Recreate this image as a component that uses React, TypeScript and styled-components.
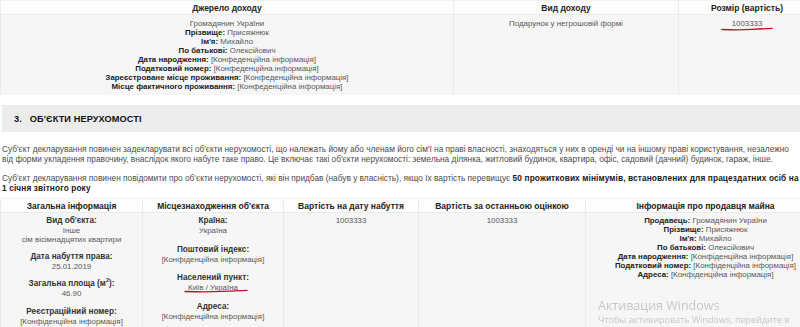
import React from 'react';
import styled, { createGlobalStyle } from 'styled-components';

const GlobalStyle = createGlobalStyle`
  body {
    margin: 0;
    background: #fff;
    font-family: "Liberation Sans", Arial, sans-serif;
    color: #444;
    overflow: hidden;
  }
`;

interface Person {
  label: string;
  value: string;
}

const incomeSource: Person[] = [
  { label: 'Прізвище:', value: 'Присяжнюк' },
  { label: "Ім'я:", value: 'Михайло' },
  { label: 'По батькові:', value: 'Олексійович' },
  { label: 'Дата народження:', value: '[Конфеденційна інформація]' },
  { label: 'Податковий номер:', value: '[Конфеденційна інформація]' },
  { label: 'Зареєстроване місце проживання:', value: '[Конфеденційна інформація]' },
  { label: 'Місце фактичного проживання:', value: '[Конфеденційна інформація]' },
];

const seller: Person[] = [
  { label: 'Продавець:', value: 'Громадянин України' },
  { label: 'Прізвище:', value: 'Присяжнюк' },
  { label: "Ім'я:", value: 'Михайло' },
  { label: 'По батькові:', value: 'Олексійович' },
  { label: 'Дата народження:', value: '[Конфіденційна інформація]' },
  { label: 'Податковий номер:', value: '[Конфіденційна інформація]' },
  { label: 'Адреса:', value: '[Конфіденційна інформація]' },
];

function RedLine({ width }: { width: number }) {
  return (
    <Scribble width={width} height={6} viewBox={`0 0 ${width} 6`}>
      <path
        d={`M1 3.5 Q ${width * 0.35} 4.2 ${width * 0.6} 3.4 T ${width - 1} 2.4`}
        stroke="#c0112a"
        strokeWidth="1.4"
        fill="none"
        strokeLinecap="round"
      />
    </Scribble>
  );
}

export default function App() {
  return (
    <>
      <GlobalStyle />
      <Page>
        <Table>
          <thead>
            <tr>
              <Th $w={448}>Джерело доходу</Th>
              <Th $w={220}>Вид доходу</Th>
              <Th $w={132}>Розмір (вартість)</Th>
            </tr>
          </thead>
          <tbody>
            <tr>
              <Td>
                <Line>Громадянин України</Line>
                {incomeSource.map((p) => (
                  <Line key={p.label}>
                    <b>{p.label}</b> {p.value}
                  </Line>
                ))}
              </Td>
              <Td>
                <Line>Подарунок у негрошовій формі</Line>
              </Td>
              <Td>
                <Marked>
                  1003333
                  <UnderMark $left={-11} $top={7}>
                    <RedLine width={52} />
                  </UnderMark>
                </Marked>
              </Td>
            </tr>
          </tbody>
        </Table>

        <SectionBar>
          <SectionTitle>3.&nbsp;&nbsp; ОБ'ЄКТИ НЕРУХОМОСТІ</SectionTitle>
        </SectionBar>

        <Paragraph>
          Суб'єкт декларування повинен задекларувати всі об'єкти нерухомості, що належать йому або
          членам його сім'ї на праві власності, знаходяться у них в оренді чи на іншому праві
          користування, незалежно від форми укладення правочину, внаслідок якого набуте таке право.
          Це включає такі об'єкти нерухомості: земельна ділянка, житловий будинок, квартира, офіс,
          садовий (дачний) будинок, гараж, інше.
        </Paragraph>
        <Paragraph>
          Суб'єкт декларування повинен повідомити про об'єкти нерухомості, які він придбав (набув у
          власність), якщо їх вартість перевищує{' '}
          <b>50 прожиткових мінімумів, встановлених для працездатних осіб на 1 січня звітного року</b>
        </Paragraph>

        <Table $top={5}>
          <thead>
            <tr>
              <Th $w={137}>Загальна інформація</Th>
              <Th $w={136}>Місцезнаходження об'єкта</Th>
              <Th $w={130}>Вартість на дату набуття</Th>
              <Th $w={162}>Вартість за останньою оцінкою</Th>
              <Th $w={235}>Інформація про продавця майна</Th>
            </tr>
          </thead>
          <tbody>
            <tr>
              <Td $pad={3}>
                <Field>
                  <FieldLabel>Вид об'єкта:</FieldLabel>
                  <FieldValue>Інше</FieldValue>
                  <FieldValue>сім вісімнадцятих квартири</FieldValue>
                </Field>
                <Field>
                  <FieldLabel>Дата набуття права:</FieldLabel>
                  <FieldValue>25.01.2019</FieldValue>
                </Field>
                <Field $gap={9}>
                  <FieldLabel>
                    Загальна площа (м<Sup>2</Sup>):
                  </FieldLabel>
                  <FieldValue>46.90</FieldValue>
                </Field>
                <Field>
                  <FieldLabel>Реєстраційний номер:</FieldLabel>
                  <FieldValue>[Конфіденційна інформація]</FieldValue>
                </Field>
              </Td>
              <Td $pad={3}>
                <Field $gap={10}>
                  <FieldLabel>Країна:</FieldLabel>
                  <FieldValue>Україна</FieldValue>
                </Field>
                <Field $gap={9}>
                  <FieldLabel>Поштовий індекс:</FieldLabel>
                  <FieldValue>[Конфіденційна інформація]</FieldValue>
                </Field>
                <Field $gap={10}>
                  <FieldLabel>Населений пункт:</FieldLabel>
                  <FieldValue>
                    <Marked>
                      Київ / Україна
                      <UnderMark $left={-4} $top={5}>
                        <RedLine width={64} />
                      </UnderMark>
                    </Marked>
                  </FieldValue>
                </Field>
                <Field>
                  <FieldLabel>Адреса:</FieldLabel>
                  <FieldValue>[Конфіденційна інформація]</FieldValue>
                </Field>
              </Td>
              <Td $pad={3}>
                <Line>1003333</Line>
              </Td>
              <Td $pad={3}>
                <Line>1003333</Line>
              </Td>
              <Td $pad={3}>
                {seller.map((p) => (
                  <Line key={p.label}>
                    <b>{p.label}</b> {p.value}
                  </Line>
                ))}
              </Td>
            </tr>
          </tbody>
        </Table>
      </Page>

      <Watermark>
        <WatermarkTitle>Активация Windows</WatermarkTitle>
        <WatermarkText>Чтобы активировать Windows, перейдите в</WatermarkText>
      </Watermark>
    </>
  );
}

const Page = styled.div`
  width: 800px;
`;

const Table = styled.table<{ $top?: number }>`
  width: 800px;
  table-layout: fixed;
  border-collapse: collapse;
  margin-top: ${(p) => p.$top || 0}px;
`;

const Th = styled.th<{ $w: number }>`
  width: ${(p) => p.$w}px;
  height: 12px;
  padding: 1px 2px 0;
  background: #fdfdfd;
  color: #222;
  font-weight: bold;
  font-size: 8.5px;
  line-height: 11px;
  text-align: center;
  border: 1px solid #ebebeb;
  border-top-color: #f2f2f2;
  white-space: nowrap;
  overflow: hidden;
`;

const Td = styled.td<{ $pad?: number }>`
  padding: ${(p) => p.$pad ?? 4}px 3px 4px;
  background: #f6f6f6;
  color: #585858;
  vertical-align: top;
  text-align: center;
  border-left: 1px solid #ebebeb;
  border-right: 1px solid #ebebeb;
  font-size: 7.9px;
  line-height: 9px;

  b {
    color: #222;
  }
`;

const Line = styled.div`
  white-space: nowrap;
`;

const Marked = styled.span`
  position: relative;
  display: inline-block;
`;

const UnderMark = styled.span<{ $left: number; $top: number }>`
  position: absolute;
  left: ${(p) => p.$left}px;
  top: ${(p) => p.$top}px;
  line-height: 0;
`;

const Scribble = styled.svg`
  display: block;
`;

const SectionBar = styled.div`
  margin: 10px 0 0 2px;
  height: 27px;
  background: #ececec;
  display: flex;
  align-items: center;
  padding-left: 12px;
`;

const SectionTitle = styled.h3`
  margin: 0;
  font-size: 9.2px;
  font-weight: bold;
  color: #111;
  letter-spacing: 0.1px;
`;

const Paragraph = styled.p`
  margin: 12px 0 0 2px;
  font-size: 8.3px;
  line-height: 10px;
  color: #4a4a4a;

  & + & {
    margin-top: 9px;
  }

  b {
    color: #1a1a1a;
    letter-spacing: 0.12px;
  }
`;

const Field = styled.div<{ $gap?: number }>`
  margin-bottom: ${(p) => p.$gap ?? 8}px;
`;

const FieldLabel = styled.div`
  font-weight: bold;
  color: #333;
  font-size: 8.2px;
  line-height: 10px;
`;

const FieldValue = styled.div`
  color: #585858;
  line-height: 9px;
  white-space: nowrap;
`;

const Sup = styled.sup`
  font-size: 5.5px;
  line-height: 0;
`;

const Watermark = styled.div`
  position: fixed;
  left: 598px;
  top: 298px;
  font-family: "Open Sans", "Liberation Sans", sans-serif;
  color: rgba(160, 160, 160, 0.55);
  pointer-events: none;
`;

const WatermarkTitle = styled.div`
  font-size: 12.5px;
  line-height: 16px;
`;

const WatermarkText = styled.div`
  font-size: 9px;
  line-height: 12px;
  white-space: nowrap;
`;
